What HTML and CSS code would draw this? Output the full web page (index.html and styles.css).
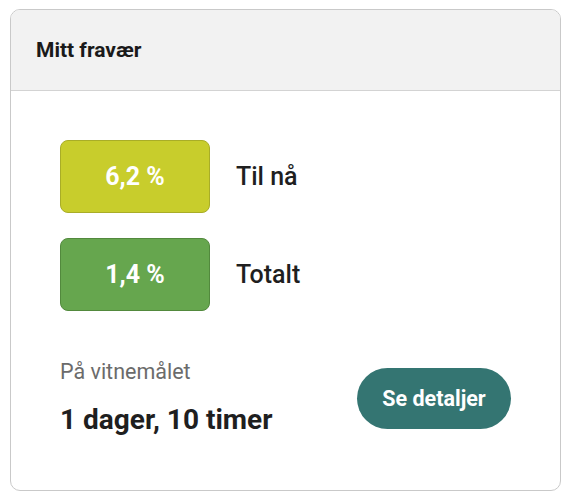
FILE: index.html
```html
<!DOCTYPE html>
<html lang="no">
<head>
<meta charset="utf-8">
<link rel="stylesheet" href="styles.css">
</head>
<body>
<div class="card">
  <div class="card-header">Mitt fravær</div>
  <div class="card-body">
    <div class="stat">
      <div class="badge badge-yellow">6,2 %</div>
      <div class="stat-label">Til nå</div>
    </div>
    <div class="stat">
      <div class="badge badge-green">1,4 %</div>
      <div class="stat-label">Totalt</div>
    </div>
    <div class="summary">
      <div class="summary-text">
        <div class="summary-label">På vitnemålet</div>
        <div class="summary-value">1 dager, 10 timer</div>
      </div>
      <button class="btn">Se detaljer</button>
    </div>
  </div>
</div>
</body>
</html>
```
FILE: styles.css
```css
html, body {
  margin: 0;
  padding: 0;
  background: #ffffff;
}
body {
  font-family: Roboto, "Liberation Sans", Arial, sans-serif;
  color: #1f1f1f;
  padding: 9px 9px 0 10px;
}
.card {
  width: 551px;
  height: 482px;
  box-sizing: border-box;
  border: 1px solid #c9c9c9;
  border-radius: 10px;
  overflow: hidden;
  display: flex;
  flex-direction: column;
}
.card-header {
  background: #f2f2f2;
  height: 81px;
  box-sizing: border-box;
  border-bottom: 1px solid #d3d3d3;
  padding-left: 25px;
  display: flex;
  align-items: center;
  font-size: 21px;
  font-weight: 700;
  color: #1a1a1a;
}
.card-body {
  padding: 49px 49px 0 49px;
  display: flex;
  flex-direction: column;
  gap: 25px;
}
.stat {
  display: flex;
  align-items: center;
  gap: 26px;
}
.badge {
  width: 150px;
  height: 73px;
  box-sizing: border-box;
  border-radius: 8px;
  display: flex;
  align-items: center;
  justify-content: center;
  color: #ffffff;
  font-size: 25px;
  font-weight: 700;
}
.badge-yellow {
  background: #c8cd2c;
  border: 1px solid #a9ad27;
}
.badge-green {
  background: #66a64e;
  border: 1px solid #52893d;
}
.stat-label {
  font-size: 25px;
  font-weight: 500;
  color: #1f1f1f;
}
.summary {
  display: flex;
  align-items: center;
  justify-content: space-between;
  margin-top: 23px;
}
.summary-text {
  display: flex;
  flex-direction: column;
  gap: 19px;
}
.summary-label {
  font-size: 21.5px;
  color: #6b6b6b;
  line-height: 26px;
}
.summary-value {
  font-size: 28px;
  font-weight: 700;
  color: #1f1f1f;
  line-height: 32px;
}
.btn {
  width: 154px;
  height: 61px;
  border: none;
  border-radius: 31px;
  background: #347572;
  color: #ffffff;
  font-family: inherit;
  font-size: 21.5px;
  font-weight: 700;
  padding: 0;
  margin-top: 2px;
}
```
